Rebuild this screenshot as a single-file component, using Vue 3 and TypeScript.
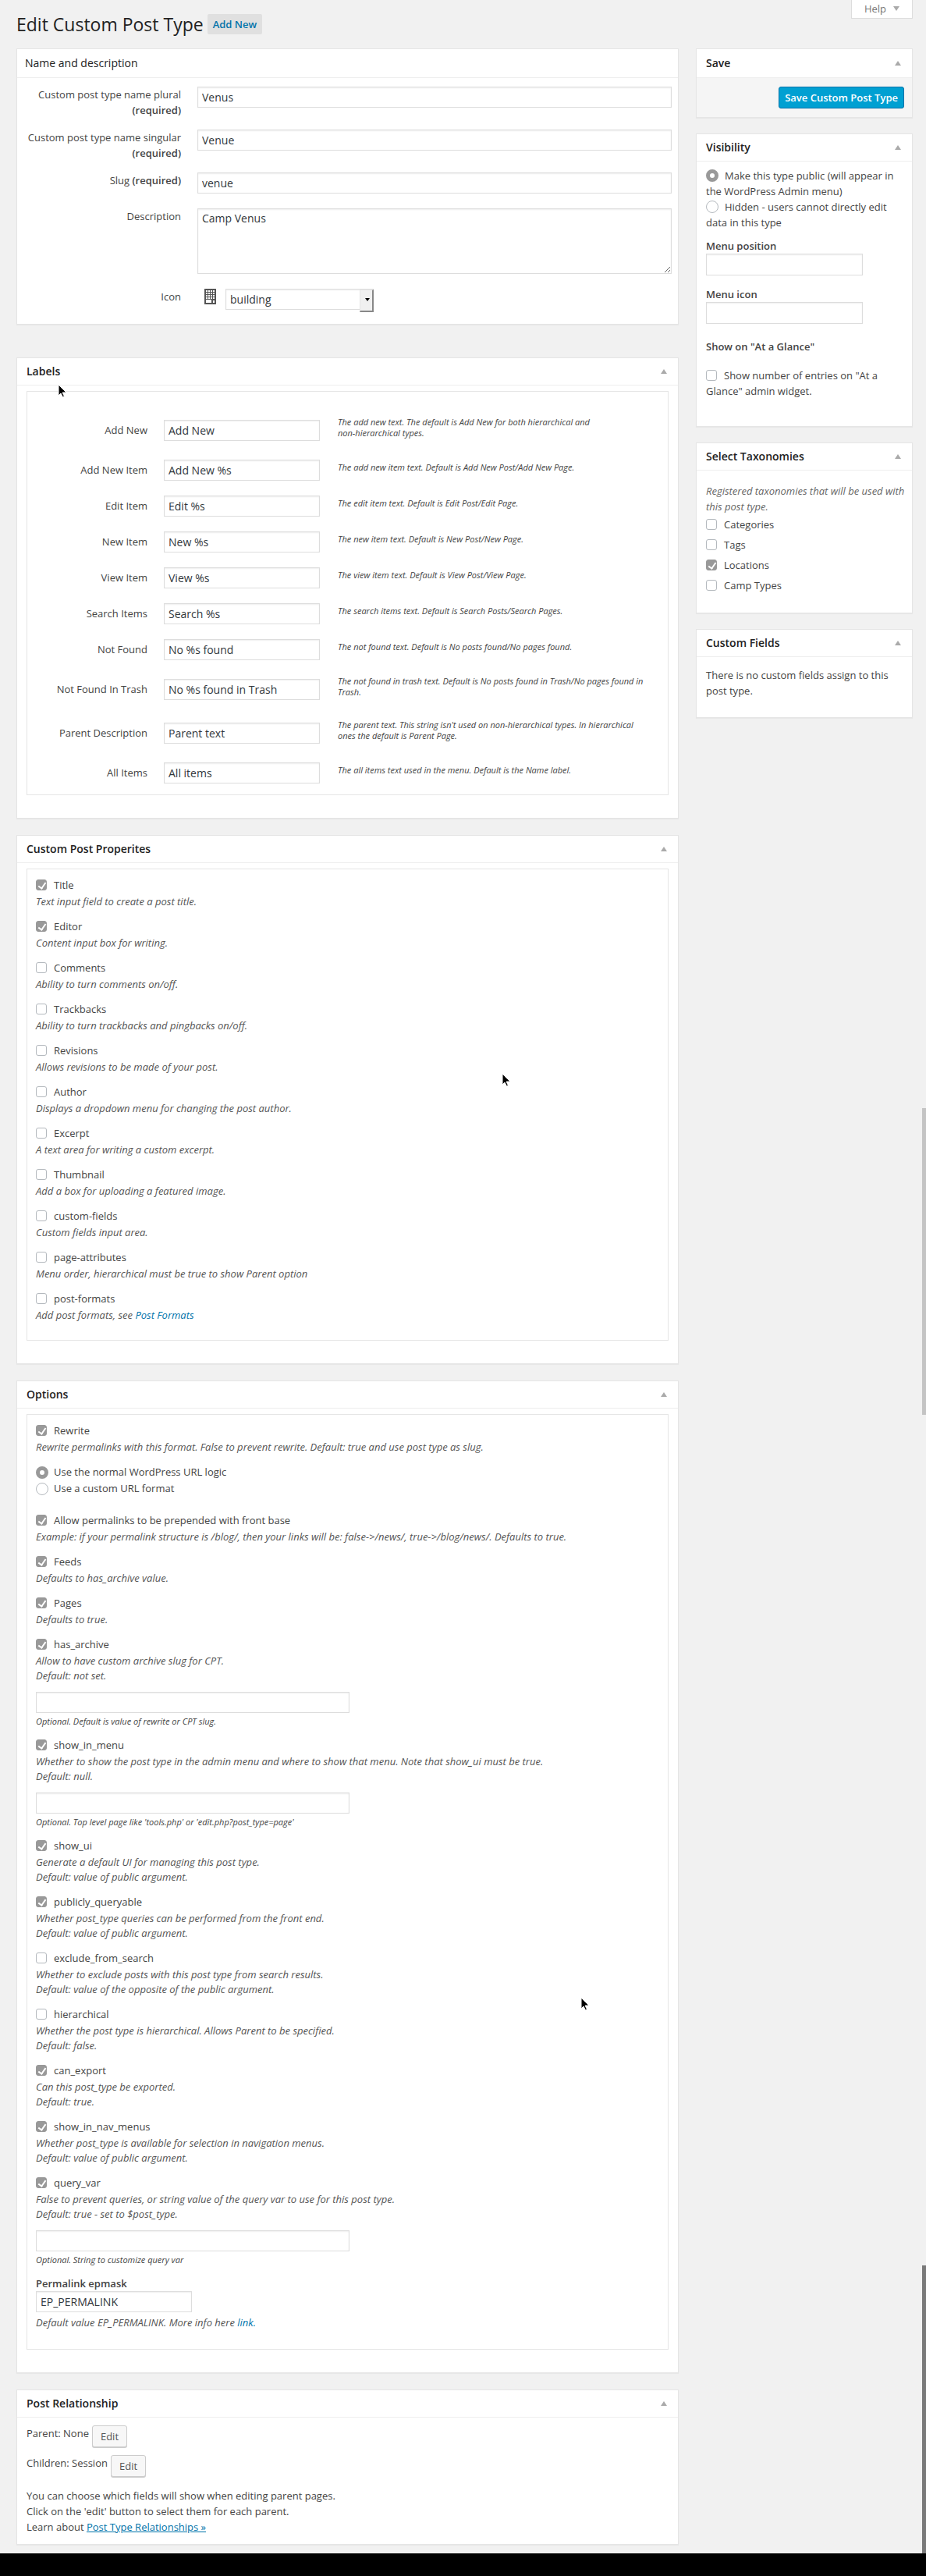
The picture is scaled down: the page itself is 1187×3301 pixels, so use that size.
<script setup lang="ts">
import { ref } from 'vue'

interface LabelField {
  id: string
  name: string
  value: string
  hint: string
}

interface Toggle {
  id: string
  checked: boolean
  lines: string[]
  label?: string
  link?: string
  note?: string
}

const plural = ref('Venus')
const singular = ref('Venue')
const slug = ref('venue')
const description = ref('Camp Venus')
const icon = ref('building')
const epmask = ref('EP_PERMALINK')
const visibility = ref('public')
const urlFormat = ref('normal')
const glance = ref(false)

const labelFields = ref<LabelField[]>([
  { id: 'add-new', name: 'Add New', value: 'Add New', hint: 'The add new text. The default is Add New for both hierarchical and\nnon-hierarchical types.' },
  { id: 'add-new-item', name: 'Add New Item', value: 'Add New %s', hint: 'The add new item text. Default is Add New Post/Add New Page.' },
  { id: 'edit-item', name: 'Edit Item', value: 'Edit %s', hint: 'The edit item text. Default is Edit Post/Edit Page.' },
  { id: 'new-item', name: 'New Item', value: 'New %s', hint: 'The new item text. Default is New Post/New Page.' },
  { id: 'view-item', name: 'View Item', value: 'View %s', hint: 'The view item text. Default is View Post/View Page.' },
  { id: 'search-items', name: 'Search Items', value: 'Search %s', hint: 'The search items text. Default is Search Posts/Search Pages.' },
  { id: 'not-found', name: 'Not Found', value: 'No %s found', hint: 'The not found text. Default is No posts found/No pages found.' },
  { id: 'not-found-trash', name: 'Not Found In Trash', value: 'No %s found in Trash', hint: 'The not found in trash text. Default is No posts found in Trash/No pages found in\nTrash.' },
  { id: 'parent', name: 'Parent Description', value: 'Parent text', hint: "The parent text. This string isn't used on non-hierarchical types. In hierarchical\nones the default is Parent Page." },
  { id: 'all-items', name: 'All Items', value: 'All items', hint: 'The all items text used in the menu. Default is the Name label.' },
])

const supports = ref<Toggle[]>([
  { id: 'Title', checked: true, lines: ['Text input field to create a post title.'] },
  { id: 'Editor', checked: true, lines: ['Content input box for writing.'] },
  { id: 'Comments', checked: false, lines: ['Ability to turn comments on/off.'] },
  { id: 'Trackbacks', checked: false, lines: ['Ability to turn trackbacks and pingbacks on/off.'] },
  { id: 'Revisions', checked: false, lines: ['Allows revisions to be made of your post.'] },
  { id: 'Author', checked: false, lines: ['Displays a dropdown menu for changing the post author.'] },
  { id: 'Excerpt', checked: false, lines: ['A text area for writing a custom excerpt.'] },
  { id: 'Thumbnail', checked: false, lines: ['Add a box for uploading a featured image.'] },
  { id: 'custom-fields', checked: false, lines: ['Custom fields input area.'] },
  { id: 'page-attributes', checked: false, lines: ['Menu order, hierarchical must be true to show Parent option'] },
  { id: 'post-formats', checked: false, lines: ['Add post formats, see '], link: 'Post Formats' },
])

const rewrite = ref(true)

const options = ref<Toggle[]>([
  { id: 'with_front', label: 'Allow permalinks to be prepended with front base', checked: true, lines: ['Example: if your permalink structure is /blog/, then your links will be: false->/news/, true->/blog/news/. Defaults to true.'] },
  { id: 'Feeds', checked: true, lines: ['Defaults to has_archive value.'] },
  { id: 'Pages', checked: true, lines: ['Defaults to true.'] },
  { id: 'has_archive', checked: true, lines: ['Allow to have custom archive slug for CPT.', 'Default: not set.'], note: 'Optional. Default is value of rewrite or CPT slug.' },
  { id: 'show_in_menu', checked: true, lines: ['Whether to show the post type in the admin menu and where to show that menu. Note that show_ui must be true.', 'Default: null.'], note: "Optional. Top level page like 'tools.php' or 'edit.php?post_type=page'" },
  { id: 'show_ui', checked: true, lines: ['Generate a default UI for managing this post type.', 'Default: value of public argument.'] },
  { id: 'publicly_queryable', checked: true, lines: ['Whether post_type queries can be performed from the front end.', 'Default: value of public argument.'] },
  { id: 'exclude_from_search', checked: false, lines: ['Whether to exclude posts with this post type from search results.', 'Default: value of the opposite of the public argument.'] },
  { id: 'hierarchical', checked: false, lines: ['Whether the post type is hierarchical. Allows Parent to be specified.', 'Default: false.'] },
  { id: 'can_export', checked: true, lines: ['Can this post_type be exported.', 'Default: true.'] },
  { id: 'show_in_nav_menus', checked: true, lines: ['Whether post_type is available for selection in navigation menus.', 'Default: value of public argument.'] },
  { id: 'query_var', checked: true, lines: ['False to prevent queries, or string value of the query var to use for this post type.', 'Default: true - set to $post_type.'], note: 'Optional. String to customize query var' },
])

const taxonomies = ref([
  { name: 'Categories', checked: false },
  { name: 'Tags', checked: false },
  { name: 'Locations', checked: true },
  { name: 'Camp Types', checked: false },
])

const pointers = ['pointer-labels', 'pointer-supports', 'pointer-options']
</script>

<template>
  <div class="screen">
    <div class="columns">
      <main class="primary">
        <header class="page-head">
          <h1>Edit Custom Post Type</h1>
          <a href="#" class="add-new">Add New</a>
        </header>

        <section class="panel naming">
          <div class="panel-head tall plain"><h2>Name and description</h2></div>
          <div class="naming-body">
            <div class="name-row">
              <label for="plural">Custom post type name plural <b>(required)</b></label>
              <input id="plural" v-model="plural" type="text" />
            </div>
            <div class="name-row">
              <label for="singular">Custom post type name singular <b>(required)</b></label>
              <input id="singular" v-model="singular" type="text" />
            </div>
            <div class="name-row short">
              <label for="slug">Slug <b>(required)</b></label>
              <input id="slug" v-model="slug" type="text" />
            </div>
            <div class="name-row area">
              <label for="description">Description</label>
              <textarea id="description" v-model="description"></textarea>
            </div>
            <div class="name-row last">
              <label for="icon">Icon</label>
              <div class="icon-pick">
                <svg class="building" viewBox="0 0 15 20" width="15" height="20" aria-hidden="true">
                  <path fill="#555" fill-rule="evenodd" d="M0 0h15v20H0zM2 2v2h2V2zM5 2v2h2V2zM8 2v2h2V2zM11 2v2h2V2zM2 5v2h2V5zM5 5v2h2V5zM8 5v2h2V5zM11 5v2h2V5zM2 8v2h2V8zM5 8v2h2V8zM8 8v2h2V8zM11 8v2h2V8zM2 11v2h2v-2zM5 11v2h2v-2zM8 11v2h2v-2zM11 11v2h2v-2zM2 14v4h7v-4zM11 15v3h2v-3z" />
                </svg>
                <span class="select-wrap">
                  <select id="icon" v-model="icon"><option>building</option></select>
                </span>
              </div>
            </div>
          </div>
        </section>

        <section class="panel">
          <div class="panel-head"><h2>Labels</h2><i class="arrow"></i></div>
          <div class="inset labels">
            <div v-for="f in labelFields" :key="f.id" class="label-row">
              <label :for="f.id">{{ f.name }}</label>
              <input :id="f.id" v-model="f.value" type="text" />
              <p>{{ f.hint }}</p>
            </div>
          </div>
        </section>

        <section class="panel">
          <div class="panel-head"><h2>Custom Post Properites</h2><i class="arrow"></i></div>
          <div class="inset">
            <div v-for="s in supports" :key="s.id" class="toggle">
              <label><input v-model="s.checked" type="checkbox" />{{ s.id }}</label>
              <p v-for="line in s.lines" :key="line">{{ line }}<a v-if="s.link" href="#">{{ s.link }}</a></p>
            </div>
          </div>
        </section>

        <section class="panel">
          <div class="panel-head"><h2>Options</h2><i class="arrow"></i></div>
          <div class="inset">
            <div class="toggle">
              <label><input v-model="rewrite" type="checkbox" />Rewrite</label>
              <p>Rewrite permalinks with this format. False to prevent rewrite. Default: true and use post type as slug.</p>
            </div>
            <div class="url-format">
              <label><input v-model="urlFormat" type="radio" name="url" value="normal" />Use the normal WordPress URL logic</label>
              <label><input v-model="urlFormat" type="radio" name="url" value="custom" />Use a custom URL format</label>
            </div>
            <div v-for="o in options" :key="o.id" class="toggle" :class="{ extended: o.note }">
              <label><input v-model="o.checked" type="checkbox" />{{ o.label ?? o.id }}</label>
              <p v-for="line in o.lines" :key="line">{{ line }}</p>
              <template v-if="o.note">
                <input type="text" class="wide" :aria-label="o.id + ' value'" />
                <small>{{ o.note }}</small>
              </template>
            </div>
            <div class="epmask">
              <label for="epmask">Permalink epmask</label>
              <input id="epmask" v-model="epmask" type="text" />
              <p>Default value EP_PERMALINK. More info here <a href="#">link.</a></p>
            </div>
          </div>
        </section>

        <section class="panel">
          <div class="panel-head"><h2>Post Relationship</h2><i class="arrow"></i></div>
          <div class="relations">
            <div class="relation"><span>Parent: None</span><button type="button">Edit</button></div>
            <div class="relation"><span>Children: Session</span><button type="button">Edit</button></div>
            <p>
              You can choose which fields will show when editing parent pages.<br />
              Click on the 'edit' button to select them for each parent.<br />
              Learn about <a href="#">Post Type Relationships »</a>
            </p>
          </div>
        </section>
      </main>

      <aside class="side">
        <button type="button" class="help">Help<i class="arrow down"></i></button>

        <section class="panel">
          <div class="panel-head tall"><h2>Save</h2><i class="arrow"></i></div>
          <div class="save-body"><button type="submit" class="save">Save Custom Post Type</button></div>
        </section>

        <section class="panel">
          <div class="panel-head"><h2>Visibility</h2><i class="arrow"></i></div>
          <div class="visibility">
            <label><input v-model="visibility" type="radio" name="vis" value="public" />Make this type public (will appear in the WordPress Admin menu)</label>
            <label><input v-model="visibility" type="radio" name="vis" value="hidden" />Hidden - users cannot directly edit data in this type</label>
            <div class="menu-field">
              <label for="menu-position">Menu position</label>
              <input id="menu-position" type="text" />
            </div>
            <div class="menu-field">
              <label for="menu-icon">Menu icon</label>
              <input id="menu-icon" type="text" />
            </div>
            <h3>Show on "At a Glance"</h3>
            <label><input v-model="glance" type="checkbox" />Show number of entries on "At a Glance" admin widget.</label>
          </div>
        </section>

        <section class="panel">
          <div class="panel-head"><h2>Select Taxonomies</h2><i class="arrow"></i></div>
          <div class="taxonomies">
            <p>Registered taxonomies that will be used with this post type.</p>
            <label v-for="t in taxonomies" :key="t.name"><input v-model="t.checked" type="checkbox" />{{ t.name }}</label>
          </div>
        </section>

        <section class="panel">
          <div class="panel-head"><h2>Custom Fields</h2><i class="arrow"></i></div>
          <p class="no-fields">There is no custom fields assign to this post type.</p>
        </section>
      </aside>
    </div>
    <footer class="base"></footer>

    <svg v-for="p in pointers" :key="p" class="pointer" :class="p" viewBox="0 0 12 18" width="12" height="18" aria-hidden="true">
      <path d="M1 1v14l3-3 2.500 5 2-1-2.400-5H11z" fill="#000" stroke="#fff" stroke-width="1" />
    </svg>
    <div class="thumb middle"></div>
    <div class="thumb bottom"></div>
  </div>
</template>

<style>
body {
  margin: 0;
  background: #f1f1f1;
}
</style>

<style scoped>
.screen {
  position: relative;
  font-family: "Open Sans", sans-serif;
  font-size: 13px;
  line-height: 20px;
  color: #444;
}
.screen * {
  box-sizing: border-box;
}
h1, h2, h3, p {
  margin: 0;
}
b, h3 {
  font-weight: 600;
}
a {
  color: #0073aa;
  text-decoration: none;
}
.columns {
  display: flex;
  align-items: flex-start;
  gap: 22px;
  padding: 0 17px 11px 21px;
}
.primary {
  flex: 1;
  min-width: 0;
  display: flex;
  flex-direction: column;
  gap: 21px;
}
.side {
  width: 278px;
  display: flex;
  flex-direction: column;
  gap: 20px;
}
.page-head {
  display: flex;
  align-items: center;
  gap: 5px;
  height: 41px;
  padding-top: 20px;
}
h1 {
  font-size: 23px;
  font-weight: 400;
  color: #222;
}
.add-new {
  padding: 3px 7px;
  background: #e0e0e0;
  border-radius: 2px;
  font-weight: 600;
}
.panel {
  background: #fff;
  border: 1px solid #e5e5e5;
  box-shadow: 0 1px 1px rgba(0, 0, 0, 0.04);
}
.panel-head {
  display: flex;
  align-items: center;
  justify-content: space-between;
  height: 35px;
  padding: 0 14px 0 12px;
  border-bottom: 1px solid #eee;
}
.panel-head.tall {
  height: 37px;
}
.panel-head.plain {
  padding-left: 10px;
}
h2 {
  font-size: 14px;
  font-weight: 600;
  color: #222;
}
.plain h2 {
  font-weight: 400;
}
.arrow {
  border: 4px solid transparent;
  border-top: 0;
  border-bottom: 6px solid #aaa;
}
.arrow.down {
  border-bottom: 0;
  border-top: 6px solid #aaa;
}

input[type="text"], textarea, select {
  height: 27px;
  margin: 0;
  padding: 0 5px;
  border: 1px solid #ddd;
  border-radius: 0;
  background: #fff;
  box-shadow: inset 0 1px 2px rgba(0, 0, 0, 0.07);
  font: 14px/20px "Open Sans", sans-serif;
  color: #32373c;
}
input[type="checkbox"], input[type="radio"] {
  appearance: none;
  flex: none;
  position: relative;
  width: 14px;
  height: 14px;
  margin: 0 9px 0 0;
  border: 1px solid #b4b9be;
  border-radius: 3px;
  background: #fff;
}
input[type="checkbox"]:checked {
  background: #999;
  border-color: #999;
}
input[type="checkbox"]:checked::before {
  content: "";
  position: absolute;
  left: 4px;
  top: 1px;
  width: 4px;
  height: 8px;
  border: solid #fff;
  border-width: 0 2px 2px 0;
  transform: rotate(35deg);
}
input[type="radio"] {
  width: 16px;
  height: 16px;
  margin-right: 8px;
  border-radius: 50%;
}
input[type="radio"]:checked {
  border: 5px solid #999;
}

.naming {
  margin-bottom: 21px;
}
.naming-body {
  padding: 11px 8px 17px 0;
}
.name-row {
  display: grid;
  grid-template-columns: 210px 1fr;
  column-gap: 21px;
  min-height: 55px;
  text-align: right;
}
.name-row b {
  white-space: nowrap;
}
.name-row.short {
  min-height: 46px;
}
.name-row.area {
  min-height: 103px;
}
.name-row.last {
  min-height: 28px;
}
textarea {
  width: 100%;
  height: 84px;
  padding: 2px 5px;
  display: block;
}
.icon-pick {
  display: flex;
  gap: 12px;
  padding-left: 9px;
}
.select-wrap {
  position: relative;
  width: 190px;
  height: 27px;
}
select {
  appearance: none;
  width: 100%;
}
.select-wrap::before {
  content: "";
  position: absolute;
  right: 0;
  top: 1px;
  width: 15px;
  height: 26px;
  border: 1px solid #e5e5e5;
  border-right: 2px solid #888;
  border-bottom: 2px solid #888;
  background: #f0f0f0;
  pointer-events: none;
}
.select-wrap::after {
  content: "";
  position: absolute;
  right: 5px;
  top: 12px;
  border: 3px solid transparent;
  border-top: 4px solid #000;
  border-bottom: 0;
  pointer-events: none;
}

.inset {
  margin: 7px 12px 29px;
  padding: 10px 11px;
  border: 1px solid #e5e5e5;
}
.inset.labels {
  padding: 21px 0 5px;
}
.label-row {
  display: grid;
  grid-template-columns: 154px 200px 1fr;
  column-gap: 21px;
  align-items: center;
  min-height: 46px;
}
.label-row label {
  text-align: right;
}
.label-row p {
  padding: 11px 8px 17px 2px;
  font-size: 11px;
  line-height: 14px;
  font-style: italic;
  white-space: pre-line;
}

.toggle {
  padding-bottom: 12px;
}
.toggle label, .url-format label {
  display: flex;
  align-items: center;
  width: max-content;
}
.toggle label {
  margin-bottom: 2px;
}
.toggle p, .epmask p {
  font-style: italic;
  line-height: 19px;
  color: #555;
}
.toggle.extended {
  padding-bottom: 10px;
}
.wide {
  display: block;
  width: 402px;
}
.toggle .wide {
  margin: 11px 0 1px;
}
small {
  display: block;
  font-size: 11px;
  font-style: italic;
}
.url-format {
  line-height: 21px;
  padding-bottom: 20px;
}
.url-format input[type="radio"] {
  margin-right: 7px;
}
.epmask {
  padding-bottom: 14px;
}
.epmask label {
  display: block;
  font-weight: 600;
}
.epmask input {
  display: block;
  width: 200px;
  margin-bottom: 4px;
}

.relations {
  padding: 10px 12px 12px;
}
.relation {
  display: flex;
  gap: 4px;
  height: 38px;
}
.relation button {
  height: 28px;
  padding: 0 10px;
  border: 1px solid #ccc;
  border-radius: 3px;
  background: #f7f7f7;
  box-shadow: 0 1px 0 #ccc;
  font: 13px/20px "Open Sans", sans-serif;
  color: #555;
}
.relations p {
  margin-top: 4px;
}
.relations a {
  text-decoration: underline;
}

.help {
  align-self: flex-end;
  display: flex;
  align-items: center;
  gap: 9px;
  height: 24px;
  margin-bottom: 18px;
  padding: 0 16px 2px;
  border: 1px solid #ddd;
  border-top: 0;
  background: #fff;
  font: 13px/20px "Open Sans", sans-serif;
  color: #777;
}
.save-body {
  display: flex;
  justify-content: flex-end;
  padding: 11px 10px;
  background: #f5f5f5;
}
.save {
  height: 28px;
  padding: 0 7px;
  border: 1px solid #0073aa;
  border-radius: 3px;
  background: #00a0d2;
  font: 600 13px/20px "Open Sans", sans-serif;
  color: #fff;
}
.visibility {
  padding: 8px 12px 35px;
}
.visibility > label {
  display: block;
}
.visibility > label input {
  vertical-align: middle;
  margin-top: -4px;
}
.menu-field {
  padding-top: 10px;
}
.menu-field + .menu-field {
  padding-top: 14px;
}
.menu-field label {
  display: block;
  font-weight: 600;
}
.menu-field input[type="text"] {
  display: block;
  width: 201px;
  height: 28px;
}
h3 {
  margin: 19px 0 17px;
  font-size: 13px;
}
.taxonomies {
  padding: 16px 8px 22px 12px;
}
.taxonomies p {
  font-style: italic;
  color: #666;
}
.taxonomies label {
  display: flex;
  align-items: center;
  height: 26px;
}
.no-fields {
  padding: 13px 12px 24px;
}
.base {
  height: 30px;
  background: #000;
}

.pointer {
  position: absolute;
}
.pointer-labels {
  left: 74px;
  top: 492px;
}
.pointer-supports {
  left: 643px;
  top: 1375px;
}
.pointer-options {
  left: 744px;
  top: 2559px;
}
.thumb {
  position: absolute;
  right: 0;
  width: 5px;
}
.thumb.middle {
  top: 1420px;
  height: 393px;
  background: #c4c4c4;
}
.thumb.bottom {
  bottom: 30px;
  height: 369px;
  background: #7a7a7a;
}
</style>
